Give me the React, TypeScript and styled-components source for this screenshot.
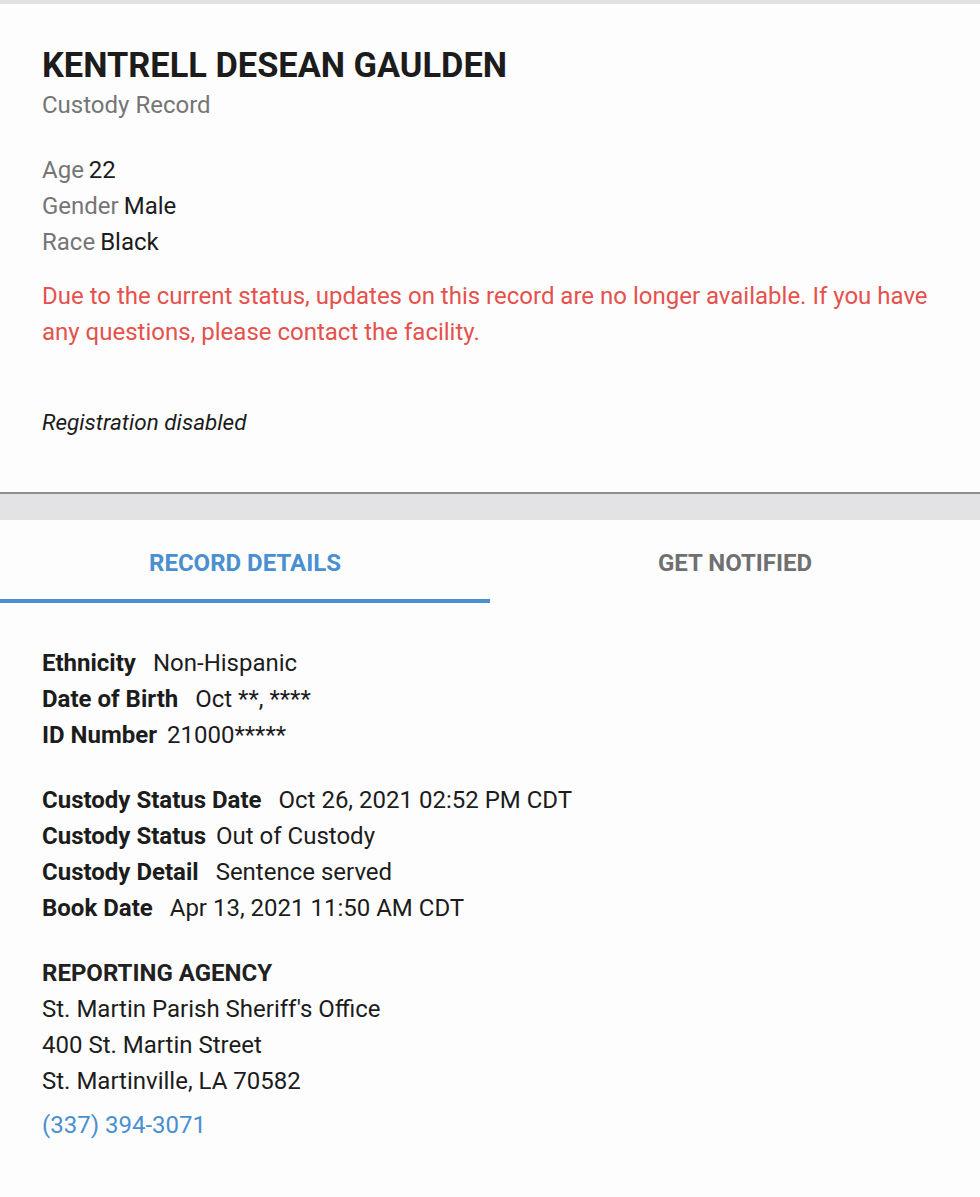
import React from "react";
import styled, { createGlobalStyle } from "styled-components";

const Global = createGlobalStyle`
  html, body {
    margin: 0;
    padding: 0;
    background: #fdfdfe;
    font-family: Roboto, "Noto Sans", Arial, sans-serif;
    color: #212121;
  }
`;

const Page = styled.div`
  width: 980px;
  border-top: 4px solid #e2e2e2;
`;

const HeaderCard = styled.section`
  background: #fdfdfe;
  padding: 39px 42px 52px;
  border-bottom: 2px solid #8e8e8e;
`;

const Name = styled.h1`
  margin: 0;
  font-size: 34.4px;
  font-weight: 700;
  line-height: 44px;
  color: #1c1c1c;
`;

const Subtitle = styled.div`
  font-size: 24px;
  line-height: 36px;
  color: #757575;
  margin-bottom: 29px;
`;

const InfoLine = styled.div`
  font-size: 24px;
  line-height: 36px;
  color: #1c1c1c;
`;

const InfoLabel = styled.span`
  color: #757575;
  margin-right: 5px;
`;

const Notice = styled.p`
  margin: 18px 0 0;
  font-size: 24px;
  line-height: 36px;
  color: #e5514c;
`;

const Italic = styled.p`
  margin: 54px 0 0;
  font-size: 22.5px;
  line-height: 36px;
  font-style: italic;
  color: #1c1c1c;
`;

const Divider = styled.div`
  height: 26px;
  background: #e3e3e5;
`;

const Tabs = styled.nav`
  display: grid;
  grid-template-columns: 490px 490px;
`;

const Tab = styled.div<{ $active?: boolean }>`
  height: 72px;
  padding-top: 7px;
  display: flex;
  align-items: center;
  justify-content: center;
  font-size: 24px;
  font-weight: 700;
  text-transform: uppercase;
  color: ${(p) => (p.$active ? "#4a8fcf" : "#707070")};
  border-bottom: 4px solid ${(p) => (p.$active ? "#4a8fcf" : "transparent")};
`;

const Details = styled.section`
  padding: 42px 42px 60px;
`;

const Group = styled.div`
  margin-bottom: 29px;
`;

const Row = styled.div`
  font-size: 24px;
  line-height: 36px;
  color: #1c1c1c;
`;

const Key = styled.span<{ $gap: number }>`
  font-weight: 700;
  margin-right: ${(p) => p.$gap}px;
`;

const AgencyTitle = styled.div`
  font-size: 24px;
  line-height: 36px;
  font-weight: 700;
  text-transform: uppercase;
`;

const Phone = styled.a`
  display: block;
  margin-top: 8px;
  font-size: 24px;
  line-height: 36px;
  color: #4a8fcf;
  text-decoration: none;
`;

type Field = [string, string, number];

const personal: Field[] = [
  ["Ethnicity", "Non-Hispanic", 17],
  ["Date of Birth", "Oct **, ****", 17],
  ["ID Number", "21000*****", 10],
];

const custody: Field[] = [
  ["Custody Status Date", "Oct 26, 2021 02:52 PM CDT", 17],
  ["Custody Status", "Out of Custody", 10],
  ["Custody Detail", "Sentence served", 17],
  ["Book Date", "Apr 13, 2021 11:50 AM CDT", 17],
];

const FieldRows = ({ fields }: { fields: Field[] }) => (
  <Group>
    {fields.map(([k, v, gap]) => (
      <Row key={k}>
        <Key $gap={gap}>{k}</Key>
        {v}
      </Row>
    ))}
  </Group>
);

export default function App() {
  return (
    <Page>
      <Global />
      <HeaderCard>
        <Name>KENTRELL DESEAN GAULDEN</Name>
        <Subtitle>Custody Record</Subtitle>
        <InfoLine>
          <InfoLabel>Age</InfoLabel>22
        </InfoLine>
        <InfoLine>
          <InfoLabel>Gender</InfoLabel>Male
        </InfoLine>
        <InfoLine>
          <InfoLabel>Race</InfoLabel>Black
        </InfoLine>
        <Notice>
          Due to the current status, updates on this record are no longer available. If you have
          any questions, please contact the facility.
        </Notice>
        <Italic>Registration disabled</Italic>
      </HeaderCard>
      <Divider />
      <Tabs>
        <Tab $active>Record Details</Tab>
        <Tab>Get Notified</Tab>
      </Tabs>
      <Details>
        <FieldRows fields={personal} />
        <FieldRows fields={custody} />
        <AgencyTitle>Reporting Agency</AgencyTitle>
        <Row>St. Martin Parish Sheriff's Office</Row>
        <Row>400 St. Martin Street</Row>
        <Row>St. Martinville, LA 70582</Row>
        <Phone href="#">(337) 394-3071</Phone>
      </Details>
    </Page>
  );
}
